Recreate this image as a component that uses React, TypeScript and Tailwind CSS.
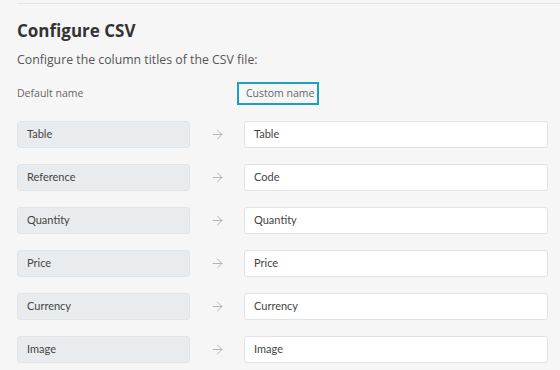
import { ArrowRight } from "lucide-react";

const rows = [
  { name: "Table", custom: "Table" },
  { name: "Reference", custom: "Code" },
  { name: "Quantity", custom: "Quantity" },
  { name: "Price", custom: "Price" },
  { name: "Currency", custom: "Currency" },
  { name: "Image", custom: "Image" },
];

function App() {
  return (
    <div className="h-[370px] w-[560px] overflow-hidden bg-[#f6f6f6] pl-[17px] pr-[12px] pt-[3px] font-['Open_Sans',sans-serif]">
      <div className="-mr-[12px] border-t border-[#e4e4e4]" />
      <h1 className="mt-[16px] text-[17px] font-bold leading-[22px] text-[#333]">Configure CSV</h1>
      <p className="mt-[9px] text-[12.3px] leading-[18px] text-[#555]">
        Configure the column titles of the CSV file:
      </p>
      <div className="mt-[13px] flex items-center">
        <span className="w-[220px] shrink-0 text-[10.5px] text-[#666]">Default name</span>
        <span className="flex h-[23px] w-[82px] shrink-0 items-center whitespace-nowrap border-2 border-[#1ea0c6] pl-[7px] text-[10.5px] text-[#666]">
          Custom name
        </span>
      </div>
      <div className="mt-[16px] flex flex-col gap-[16px] font-['Lato',sans-serif] text-[11px] text-[#444]">
        {rows.map((row) => (
          <div key={row.name} className="flex h-[27px] items-center">
            <div className="flex h-full w-[173px] shrink-0 items-center rounded-[3px] border border-[#e2e5e8] bg-[#e9ecef] pl-[9px]">
              {row.name}
            </div>
            <div className="flex w-[54px] shrink-0 justify-center">
              <ArrowRight size={15} strokeWidth={1.4} className="text-[#a3abb2]" />
            </div>
            <div className="flex h-full w-[304px] shrink-0 items-center rounded-[3px] border border-[#e3e3e3] bg-white pl-[9px]">
              {row.custom}
            </div>
          </div>
        ))}
      </div>
    </div>
  );
}

export default App;
